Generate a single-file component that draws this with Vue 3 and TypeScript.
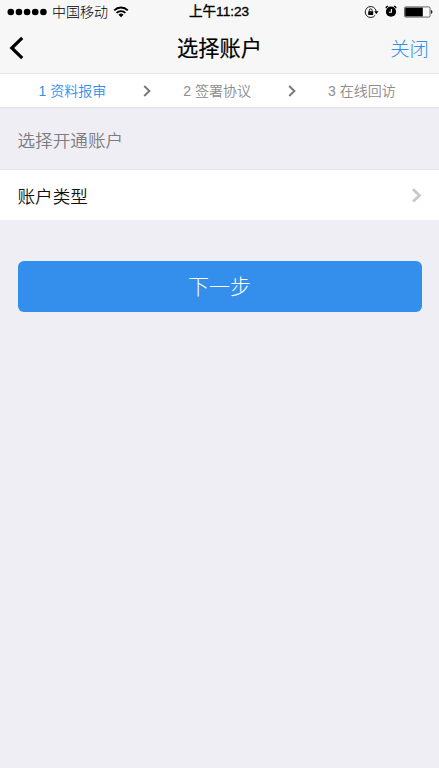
<script setup lang="ts">
import { ref } from 'vue'

interface Step {
  no: number
  label: string
}

const steps: Step[] = [
  { no: 1, label: '资料报审' },
  { no: 2, label: '签署协议' },
  { no: 3, label: '在线回访' },
]
const current = ref<number>(1)
</script>

<template>
  <div class="screen">
    <header class="header">
      <div class="status">
        <div class="status-left">
          <svg class="signal" width="40" height="8" viewBox="0 0 40 8">
            <circle v-for="n in 5" :key="n" :cx="3.8 + (n - 1) * 8.15" cy="4" r="3.3" />
          </svg>
          <span class="carrier">中国移动</span>
          <svg class="wifi" width="16" height="12" viewBox="0 0 16 12">
            <path d="M1.2 4.3a9.6 9.6 0 0 1 13.6 0M3.6 6.9a6.2 6.2 0 0 1 8.8 0" />
            <path class="solid" d="M8 11.2L5.5 8.8a3.6 3.6 0 0 1 5 0z" />
          </svg>
        </div>
        <span class="time">上午11:23</span>
        <div class="status-right">
          <svg width="15" height="14" viewBox="0 0 15 14">
            <path class="line" d="M11.2 10.2A5.5 5.5 0 1 1 12.2 6.6" />
            <path d="M10.1 6.2h4.4l-2.2 2.7z" />
            <rect x="4.2" y="6.3" width="5" height="3.7" rx=".4" />
            <path class="line" d="M5.3 6.5V5.3a1.4 1.4 0 0 1 2.8 0v1.2" />
          </svg>
          <svg class="alarm" width="12" height="13" viewBox="0 0 12 13">
            <circle cx="6" cy="6.7" r="5.1" />
            <path class="bell" d="M.9 3.2Q1.4 1.6 3.1 1.2M8.9 1.2q1.7.4 2.2 2" />
            <path class="hand" d="M6.4 4v3.2H3.9" />
          </svg>
          <svg class="battery" width="29" height="12" viewBox="0 0 29 12">
            <rect class="case" x=".5" y=".9" width="25.6" height="10.2" rx="1.3" />
            <rect x="1.2" y="1.6" width="17.6" height="8.8" />
            <path d="M27.1 4.1c1.8.6 1.8 3.2 0 3.8z" />
          </svg>
        </div>
      </div>
      <nav class="nav">
        <button class="back" aria-label="返回">
          <svg width="15" height="24" viewBox="0 0 15 24">
            <path d="M13.2 1.8L2.8 12l10.4 10.2" />
          </svg>
        </button>
        <h1 class="title">选择账户</h1>
        <button class="close">关闭</button>
      </nav>
    </header>

    <div class="steps">
      <template v-for="(s, i) in steps" :key="s.no">
        <span class="step" :class="{ active: s.no === current }">{{ s.no }} {{ s.label }}</span>
        <svg v-if="i < steps.length - 1" class="step-arrow" width="9" height="12" viewBox="0 0 9 12">
          <path d="M1.2 1l5.2 5-5.2 5" />
        </svg>
      </template>
    </div>

    <h2 class="section">选择开通账户</h2>
    <div class="row">
      <span>账户类型</span>
      <svg width="11" height="16" viewBox="0 0 11 16">
        <path d="M2 2.2l6.5 6.2L2 14.6" />
      </svg>
    </div>
    <button class="next">下一步</button>
  </div>
</template>

<style>
body {
  background: #efeef4;
}
</style>

<style scoped>
.screen {
  min-height: 768px;
  background: #efeef4;
  font-family: "Liberation Sans", "Noto Sans CJK SC", sans-serif;
  color: #222;
}
button {
  border: 0;
  padding: 0;
  background: none;
  font-family: inherit;
}
.header {
  box-sizing: border-box;
  height: 74px;
  background: #f7f7f7;
  border-bottom: 1px solid #e6e6e6;
}
.status {
  display: grid;
  grid-template-columns: 1fr auto 1fr;
  align-items: center;
  height: 23px;
  padding: 0 6px 0 7px;
  color: #000;
}
.status-left,
.status-right {
  display: flex;
  align-items: center;
}
.status-right {
  justify-content: flex-end;
}
.carrier {
  margin-left: 5px;
  font-size: 14px;
  font-weight: 300;
  line-height: 22px;
}
.wifi {
  margin-left: 5px;
}
.wifi path {
  fill: none;
  stroke: #000;
  stroke-width: 1.8;
}
.wifi .solid {
  fill: #000;
  stroke: none;
}
.time {
  margin-right: 2px;
  padding-top: 1px;
  font-size: 13.6px;
  font-weight: 400;
  line-height: 22px;
  -webkit-text-stroke: 0.35px #000;
}
.line {
  fill: none;
  stroke: #000;
  stroke-width: 0.9;
}
.alarm {
  margin-left: 6px;
}
.bell {
  fill: none;
  stroke: #000;
  stroke-width: 1.3;
}
.hand {
  fill: none;
  stroke: #fff;
  stroke-width: 1.1;
}
.battery {
  margin-left: 7px;
}
.case {
  fill: none;
  stroke: #444;
  stroke-width: 0.8;
}
.nav {
  display: grid;
  grid-template-columns: 1fr auto 1fr;
  align-items: center;
  height: 50px;
  padding: 0 10px 0 9px;
}
.back {
  justify-self: start;
  height: 24px;
}
.back svg {
  display: block;
}
.back path {
  fill: none;
  stroke: #000;
  stroke-width: 3.2;
}
.title {
  margin: 0;
  padding: 2px 0 0 1px;
  font-size: 21.2px;
  line-height: 30px;
  font-weight: 400;
  color: #000;
  -webkit-text-stroke: 0.2px #000;
}
.close {
  justify-self: end;
  padding-top: 2px;
  font-size: 19.4px;
  line-height: 28px;
  font-weight: 300;
  color: #338eec;
}
.steps {
  box-sizing: border-box;
  display: flex;
  align-items: center;
  height: 34px;
  padding-left: 38.5px;
  background: #fff;
  border-bottom: 1px solid #e2e2e4;
}
.step {
  width: 69px;
  font-size: 14px;
  line-height: 20px;
  font-weight: 350;
  white-space: nowrap;
  color: #8c8c8c;
}
.step.active {
  color: #338eec;
}
.step-arrow {
  margin: 0 31.3px 0 35.5px;
}
.step-arrow path {
  fill: none;
  stroke: #777;
  stroke-width: 1.9;
}
.section {
  box-sizing: border-box;
  height: 62px;
  margin: 0;
  padding: 0 17.5px;
  border-bottom: 1px solid #e6e5e8;
  font-size: 17.6px;
  line-height: 66px;
  font-weight: 350;
  color: #7c7c80;
}
.row {
  display: flex;
  align-items: center;
  justify-content: space-between;
  height: 50px;
  padding: 0 17px 0 17.5px;
  background: #fff;
  font-size: 17.6px;
  font-weight: 350;
  color: #111;
}
.row path {
  fill: none;
  stroke: #c7c7cc;
  stroke-width: 2.8;
}
.next {
  display: block;
  width: calc(100% - 35px);
  height: 51px;
  margin: 41px 17.5px 0;
  border-radius: 6px;
  background: #338eec;
  font-size: 21px;
  line-height: 49px;
  font-weight: 300;
  color: #fff;
}
</style>
